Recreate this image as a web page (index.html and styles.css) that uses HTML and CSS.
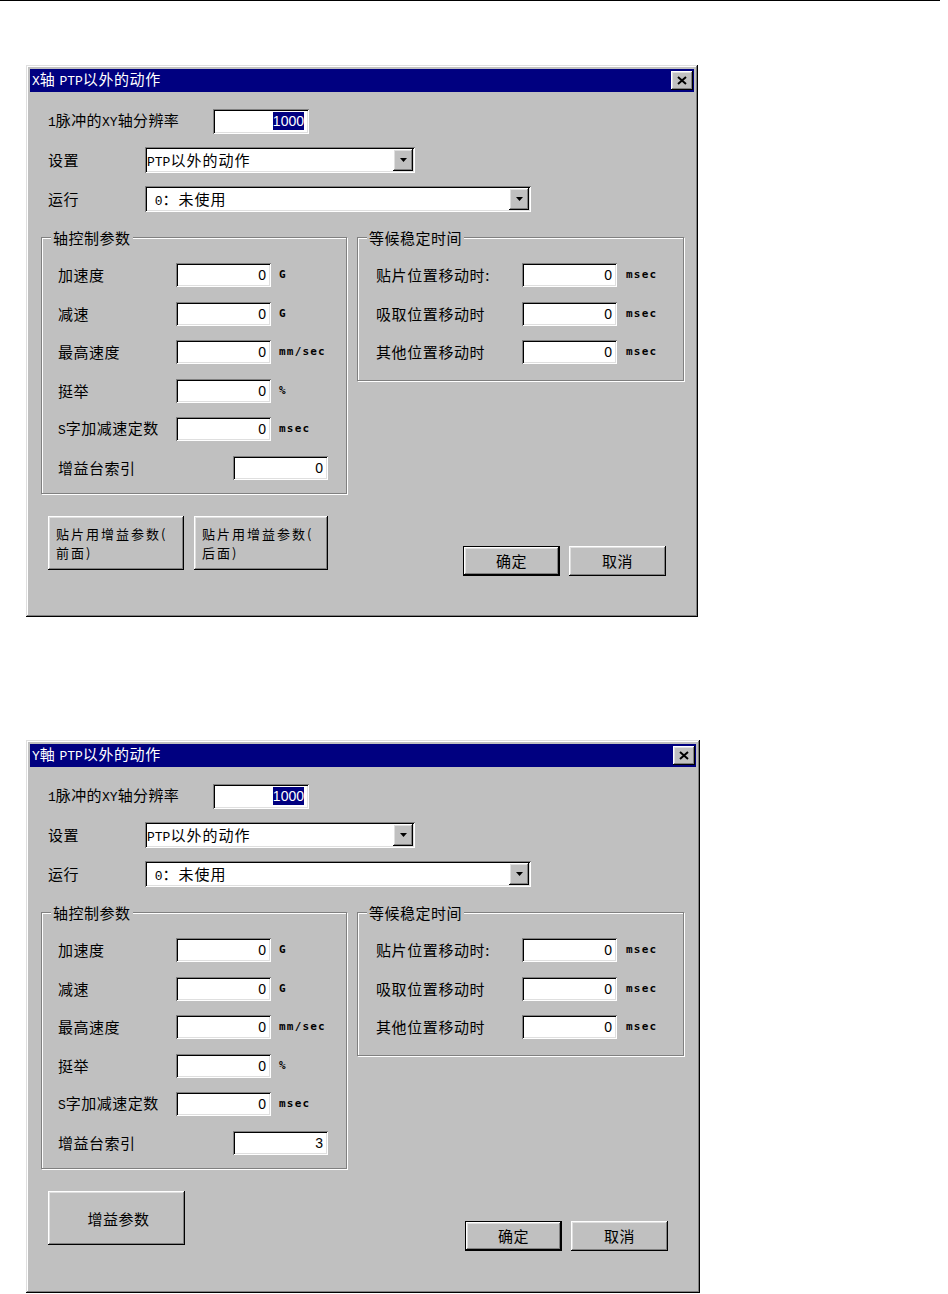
FILE: index.html
```html
<!DOCTYPE html>
<html lang="zh-CN">
<head>
    <meta charset="UTF-8">
    <meta name="viewport" content="width=device-width, initial-scale=1.0">
    <link rel="stylesheet" href="styles.css">
</head>
<body>

    <div class="rule"></div>

    <main class="page">

        <!-- X axis dialog -->
        <section class="dialog">
            <header class="titlebar">
                <span class="title"><span class="lat">X</span>轴 <span class="lat">PTP</span>以外的动作</span>
                <button class="close raised"><svg width="10" height="9" viewBox="0 0 10 9"><path d="M1 1l8 7M9 1L1 8" stroke="#000" stroke-width="2" fill="none"/></svg></button>
            </header>
            <div class="dlg-body">
                <div class="row">
                    <span class="lbl-res"><span class="lat">1</span>脉冲的<span class="lat">XY</span>轴分辨率</span>
                    <div class="edit edit-res sunken"><span class="sel">1000</span></div>
                </div>
                <div class="row">
                    <span class="lbl-opt">设置</span>
                    <div class="combo combo-set sunken">
                        <span class="combo-text"><span class="lat">PTP</span>以外的动作</span>
                        <span class="combo-btn raised"><svg width="7" height="4" viewBox="0 0 7 4"><path d="M0 0h7L3.5 4z"/></svg></span>
                    </div>
                </div>
                <div class="row">
                    <span class="lbl-opt">运行</span>
                    <div class="combo combo-run sunken">
                        <span class="combo-text"><span class="lat"> 0</span>：未使用</span>
                        <span class="combo-btn raised"><svg width="7" height="4" viewBox="0 0 7 4"><path d="M0 0h7L3.5 4z"/></svg></span>
                    </div>
                </div>

                <div class="groups">
                    <div class="group group-axis">
                        <div class="group-title">轴控制参数</div>
                        <div class="param"><span class="plbl">加速度</span><div class="edit sunken">0</div><span class="unit">G</span></div>
                        <div class="param"><span class="plbl">减速</span><div class="edit sunken">0</div><span class="unit">G</span></div>
                        <div class="param"><span class="plbl">最高速度</span><div class="edit sunken">0</div><span class="unit">mm/sec</span></div>
                        <div class="param"><span class="plbl">挺举</span><div class="edit sunken">0</div><span class="unit">%</span></div>
                        <div class="param"><span class="plbl"><span class="lat">S</span>字加减速定数</span><div class="edit sunken">0</div><span class="unit">msec</span></div>
                        <div class="param"><span class="plbl plbl-gain">增益台索引</span><div class="edit sunken">0</div></div>
                    </div>
                    <div class="group group-wait">
                        <div class="group-title">等候稳定时间</div>
                        <div class="param"><span class="wlbl">贴片位置移动时:</span><div class="edit sunken">0</div><span class="unit">msec</span></div>
                        <div class="param"><span class="wlbl">吸取位置移动时</span><div class="edit sunken">0</div><span class="unit">msec</span></div>
                        <div class="param"><span class="wlbl">其他位置移动时</span><div class="edit sunken">0</div><span class="unit">msec</span></div>
                    </div>
                </div>

                <div class="actions">
                    <div class="extra">
                        <button class="btn btn-wide raised">贴片用增益参数(<br>前面)</button>
                        <button class="btn btn-wide btn-narrow raised">贴片用增益参数(<br>后面)</button>
                    </div>
                    <div class="confirm">
                        <button class="btn btn-small btn-default">确定</button>
                        <button class="btn btn-small raised">取消</button>
                    </div>
                </div>
            </div>
        </section>

        <!-- Y axis dialog -->
        <section class="dialog dialog-y">
            <header class="titlebar">
                <span class="title"><span class="lat">Y</span>軸 <span class="lat">PTP</span>以外的动作</span>
                <button class="close raised"><svg width="10" height="9" viewBox="0 0 10 9"><path d="M1 1l8 7M9 1L1 8" stroke="#000" stroke-width="2" fill="none"/></svg></button>
            </header>
            <div class="dlg-body">
                <div class="row">
                    <span class="lbl-res"><span class="lat">1</span>脉冲的<span class="lat">XY</span>轴分辨率</span>
                    <div class="edit edit-res sunken"><span class="sel">1000</span></div>
                </div>
                <div class="row">
                    <span class="lbl-opt">设置</span>
                    <div class="combo combo-set sunken">
                        <span class="combo-text"><span class="lat">PTP</span>以外的动作</span>
                        <span class="combo-btn raised"><svg width="7" height="4" viewBox="0 0 7 4"><path d="M0 0h7L3.5 4z"/></svg></span>
                    </div>
                </div>
                <div class="row">
                    <span class="lbl-opt">运行</span>
                    <div class="combo combo-run sunken">
                        <span class="combo-text"><span class="lat"> 0</span>：未使用</span>
                        <span class="combo-btn raised"><svg width="7" height="4" viewBox="0 0 7 4"><path d="M0 0h7L3.5 4z"/></svg></span>
                    </div>
                </div>

                <div class="groups">
                    <div class="group group-axis">
                        <div class="group-title">轴控制参数</div>
                        <div class="param"><span class="plbl">加速度</span><div class="edit sunken">0</div><span class="unit">G</span></div>
                        <div class="param"><span class="plbl">减速</span><div class="edit sunken">0</div><span class="unit">G</span></div>
                        <div class="param"><span class="plbl">最高速度</span><div class="edit sunken">0</div><span class="unit">mm/sec</span></div>
                        <div class="param"><span class="plbl">挺举</span><div class="edit sunken">0</div><span class="unit">%</span></div>
                        <div class="param"><span class="plbl"><span class="lat">S</span>字加减速定数</span><div class="edit sunken">0</div><span class="unit">msec</span></div>
                        <div class="param"><span class="plbl plbl-gain">增益台索引</span><div class="edit sunken">3</div></div>
                    </div>
                    <div class="group group-wait">
                        <div class="group-title">等候稳定时间</div>
                        <div class="param"><span class="wlbl">贴片位置移动时:</span><div class="edit sunken">0</div><span class="unit">msec</span></div>
                        <div class="param"><span class="wlbl">吸取位置移动时</span><div class="edit sunken">0</div><span class="unit">msec</span></div>
                        <div class="param"><span class="wlbl">其他位置移动时</span><div class="edit sunken">0</div><span class="unit">msec</span></div>
                    </div>
                </div>

                <div class="actions">
                    <div class="extra">
                        <button class="btn btn-wide btn-center raised">增益参数</button>
                    </div>
                    <div class="confirm">
                        <button class="btn btn-small btn-default">确定</button>
                        <button class="btn btn-small raised">取消</button>
                    </div>
                </div>
            </div>
        </section>

    </main>

</body>
</html>
```

FILE: styles.css
```css
body {
    margin: 0;
    background: #fff;
    color: #000;
    font-family: "Noto Sans CJK SC", sans-serif;
    font-size: 15px;
    line-height: 18px;
}

/* SimSun-like half-width latin */
.lat {
    font-family: "Liberation Mono", monospace;
    font-size: 13px;
    letter-spacing: 0;
    white-space: pre;
}

.rule {
    width: 940px;
    height: 1px;
    background: #000;
}

.page {
    display: flex;
    flex-direction: column;
    gap: 123px;
    padding: 64px 0 0 26px;
}

/* classic 3d edges */
.raised {
    background: #c0c0c0;
    box-shadow: inset -1px -1px #000, inset 1px 1px #fff, inset -2px -2px #808080, inset 2px 2px #dfdfdf;
}

.sunken {
    background: #fff;
    box-shadow: inset 1px 1px #808080, inset -1px -1px #fff, inset 2px 2px #000, inset -2px -2px #dfdfdf;
}

.dialog {
    box-sizing: border-box;
    width: 672px;
    height: 552px;
    padding: 4px;
    background: #c0c0c0;
    box-shadow: inset -1px -1px #000, inset 1px 1px #dfdfdf, inset -2px -2px #808080, inset 2px 2px #fff;
    display: flex;
    flex-direction: column;
}

.dialog-y {
    width: 674px;
    height: 553px;
}

.titlebar {
    height: 23px;
    background: #000080;
    color: #fff;
    display: flex;
    align-items: center;
    justify-content: space-between;
    padding: 0 1px 0 2px;
}

.title {
    letter-spacing: 0.6px;
    white-space: pre;
}

.close {
    width: 22px;
    height: 19px;
    border: 0;
    padding: 0;
    display: flex;
    align-items: center;
    justify-content: center;
}

.dlg-body {
    flex: 1;
    padding: 17px 10px 0 11px;
}

.row {
    display: flex;
    align-items: center;
    margin-left: 7px;
}

.row + .row {
    margin-top: 13px;
}

.lbl-res {
    width: 165px;
    letter-spacing: 0.4px;
}

.lbl-opt {
    width: 97px;
    letter-spacing: 0.6px;
}

.edit {
    box-sizing: border-box;
    width: 95px;
    height: 24px;
    padding: 0 5px;
    font-family: "Liberation Sans", sans-serif;
    font-size: 14px;
    line-height: 24px;
    text-align: right;
}

.edit-res {
    width: 96px;
    height: 25px;
    line-height: 25px;
}

.sel {
    background: #000080;
    color: #fff;
    padding: 1px 0;
}

.combo {
    box-sizing: border-box;
    height: 26px;
    padding: 2px;
    display: flex;
}

.combo-set {
    width: 270px;
}

.combo-run {
    width: 386px;
}

.combo-text {
    flex: 1;
    line-height: 22px;
    letter-spacing: 1px;
}

.combo-btn {
    width: 20px;
    display: flex;
    align-items: center;
    justify-content: center;
}

.groups {
    display: flex;
    align-items: flex-start;
    gap: 10px;
    margin-top: 25px;
}

.group {
    box-sizing: border-box;
    border: 1px solid #808080;
    box-shadow: inset 1px 1px #fff, 1px 1px #fff;
}

.group-axis {
    width: 306px;
    padding: 0 0 13px 16px;
}

.group-wait {
    width: 327px;
    padding: 0 0 16px 18px;
}

.group-title {
    display: table;
    margin: -9px 0 0 -8px;
    padding: 0 2px;
    background: #c0c0c0;
    line-height: 18px;
    letter-spacing: 0.5px;
}

.group-axis .group-title {
    margin-left: -7px;
}

.group-wait .group-title {
    margin-left: -9px;
}

.param {
    display: flex;
    align-items: center;
    height: 24px;
}

.group-title + .param {
    margin-top: 16px;
}

.param + .param {
    margin-top: 14.5px;
}

.plbl {
    width: 118px;
    letter-spacing: 0.5px;
}

.plbl-gain {
    width: 175px;
}

.wlbl {
    width: 146px;
    letter-spacing: 0.6px;
}

.unit {
    margin-left: 8px;
    font-family: "DejaVu Sans Mono", monospace;
    font-size: 11px;
    font-weight: bold;
    letter-spacing: 1.2px;
}

.group-wait .unit {
    margin-left: 9px;
}

.actions {
    display: flex;
    align-items: flex-start;
    margin: 22px 18px 0 7px;
}

.extra {
    display: flex;
    gap: 10px;
}

.confirm {
    display: flex;
    gap: 9px;
    margin-left: auto;
    margin-top: 30px;
}

.btn {
    border: 0;
    font-family: inherit;
    font-size: 15px;
    color: #000;
    cursor: pointer;
}

.btn-wide {
    width: 136px;
    height: 54px;
    padding: 0 4px 0 8px;
    text-align: left;
    font-size: 13px;
    line-height: 19px;
    letter-spacing: 2px;
    white-space: nowrap;
}

.btn-narrow {
    width: 134px;
}

.btn-center {
    width: 137px;
    text-align: center;
    font-size: 15px;
    letter-spacing: 0.5px;
    padding-top: 2px;
}

.btn-small {
    width: 97px;
    height: 30px;
    padding: 0;
    letter-spacing: 0.5px;
}

.btn-default {
    background: #c0c0c0;
    box-shadow: inset 0 0 0 1px #000, inset -2px -2px #000, inset 2px 2px #fff, inset -3px -3px #808080, inset 3px 3px #dfdfdf;
}
```
